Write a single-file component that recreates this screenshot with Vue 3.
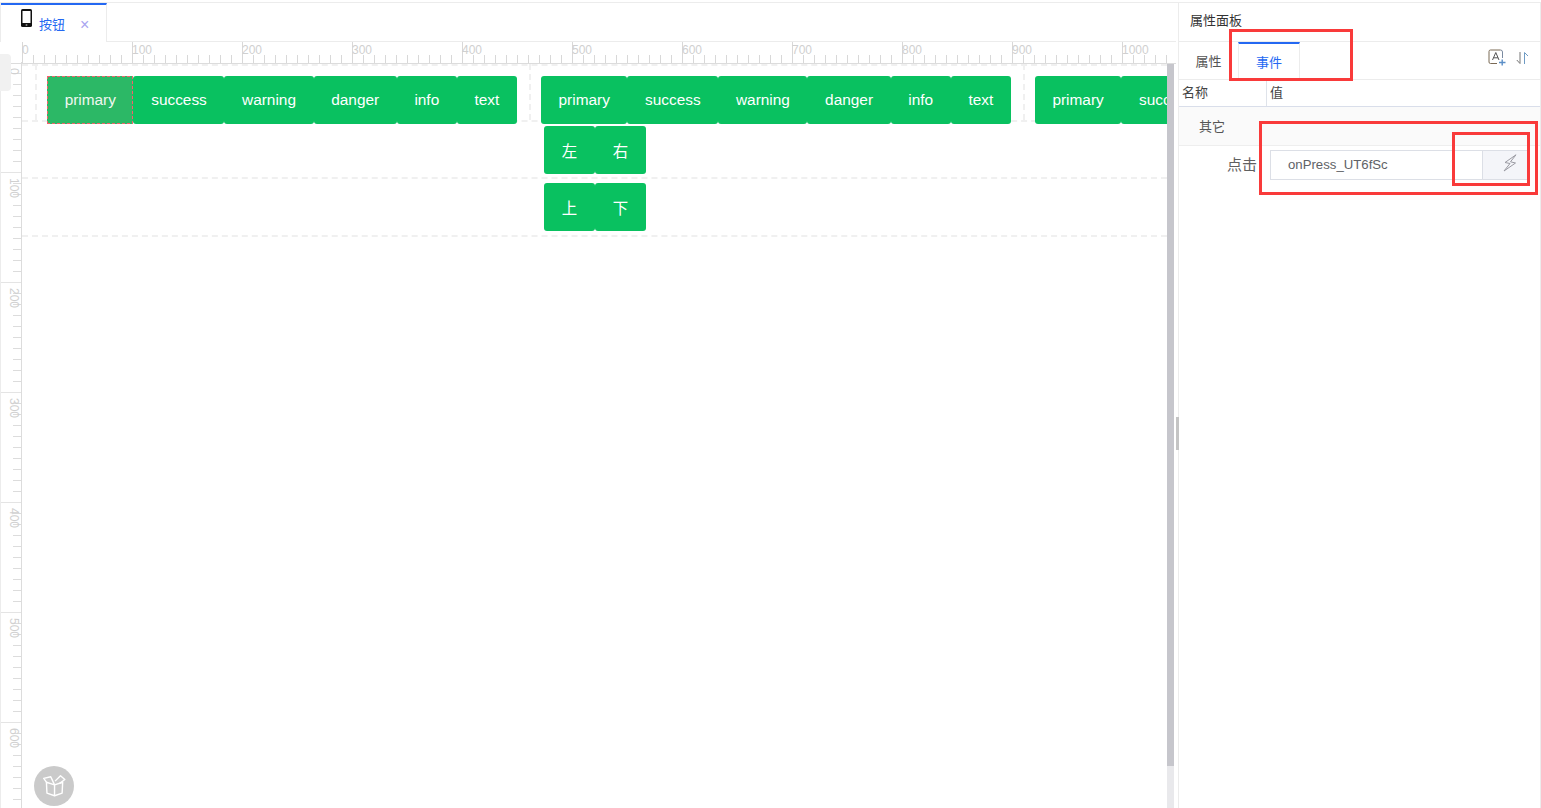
<template>
  <div class="page">
    <div class="main">
      <div class="tabbar">
        <div class="file-tab">
          <svg class="phone" width="11" height="18" viewBox="0 0 11 18">
            <rect x="0" y="0" width="11" height="18" rx="1.6" fill="#111" />
            <rect x="1.5" y="2" width="8" height="12" fill="#fff" />
            <circle cx="5.5" cy="16" r="1" fill="#888" />
          </svg>
          <span class="file-name">按钮</span>
          <span class="file-close">×</span>
        </div>
      </div>
      <div class="ruler-top">
        <div v-for="n in topMarks" :key="n" class="ruler-cell">
          <span class="ruler-num">{{ n }}</span>
        </div>
      </div>
      <div class="work">
        <div class="ruler-left">
          <div v-for="n in leftMarks" :key="n" class="ruler-vcell">
            <span class="ruler-vnum">{{ n }}</span>
          </div>
        </div>
        <div class="canvas">
          <div class="guide gh" style="top: 56px"></div>
          <div class="guide gh" style="top: 113px"></div>
          <div class="guide gh" style="top: 171px"></div>
          <div class="guide gh" style="top: 0"></div>
          <div class="guide gv" style="left: 13px"></div>
          <div class="guide gv" style="left: 507px"></div>
          <div class="guide gv" style="left: 1001px"></div>

          <div class="groups">
            <div v-for="g in 3" :key="g" class="btn-group">
              <button
                v-for="b in g === 3 ? buttons.slice(0, 2) : buttons"
                :key="b"
                class="btn"
                :class="{ selected: g === 1 && b === 'primary' }"
              >
                {{ b }}
              </button>
            </div>
          </div>
          <div class="btn-group sub first">
            <button class="btn cn">左</button>
            <button class="btn cn">右</button>
          </div>
          <div class="btn-group sub">
            <button class="btn cn">上</button>
            <button class="btn cn">下</button>
          </div>
        </div>
        <div class="scroll"><div class="scroll-thumb"></div></div>
      </div>
      <div class="side-handle"></div>
      <div class="fab">
        <svg width="26" height="26" viewBox="0 0 24 24" fill="none" stroke="#fff" stroke-width="1.3" stroke-linejoin="round">
          <path d="M5 8.5 L12.5 11 L12.5 21 L5.5 18.5 Z" />
          <path d="M12.5 11 L20 8.5 L19.5 18.5 L12.5 21" />
          <path d="M5 8.5 L2.5 5 L9 3.5 L12.5 11" />
          <path d="M13 7.5 L18 2.5 L22 6 L17 9.8" />
        </svg>
      </div>
    </div>

    <div class="splitter"><div class="split-grip"></div></div>

    <div class="panel">
      <div class="panel-title">属性面板</div>
      <div class="panel-tabs">
        <div class="ptab">属性</div>
        <div class="ptab active">事件</div>
        <div class="panel-icons">
          <svg width="18" height="18" viewBox="0 0 18 18" fill="none">
            <path d="M12.5 1 H2.5 Q1 1 1 2.5 V13 Q1 14.5 2.5 14.5 H9" stroke="#7a6a55" stroke-width="1" />
            <path d="M12.5 1 Q14.5 1 14.5 3 V9" stroke="#7a8aa0" stroke-width="1" />
            <path d="M4.5 11 L7.8 3.5 L11 11 M5.6 8.8 H10" stroke="#555" stroke-width="1" />
            <path d="M11 13.5 H17.5 M14.2 10.5 V16.5" stroke="#5b8fc7" stroke-width="1.4" />
          </svg>
          <svg class="sort-icon" width="13" height="14" viewBox="0 0 13 14" fill="none" stroke-width="1">
            <path d="M4 1 V12.5 L0.8 9" stroke="#777" />
            <path d="M8.5 13 V1.5 L12 5" stroke="#6f9bc4" />
          </svg>
        </div>
      </div>
      <div class="table-head">
        <div class="th-name">名称</div>
        <div class="th-value">值</div>
      </div>
      <div class="group-row">其它</div>
      <div class="prop-row">
        <div class="prop-label">点击</div>
        <div class="prop-input">
          <div class="prop-value">onPress_UT6fSc</div>
          <div class="prop-addon">
            <svg width="14" height="18" viewBox="0 0 14 18" fill="none" stroke="#9a9aa2" stroke-width="1" stroke-linejoin="round">
              <path d="M13 0.8 L2 8.5 L7 9.5 L1 17 L12.5 9 L7.5 7.8 Z" />
            </svg>
          </div>
        </div>
      </div>
    </div>

    <div class="mark mark-a"></div>
    <div class="mark mark-b"></div>
    <div class="mark mark-c"></div>
  </div>
</template>

<script setup>
const buttons = ["primary", "success", "warning", "danger", "info", "text"];
const topMarks = [0, 100, 200, 300, 400, 500, 600, 700, 800, 900, 1000];
const leftMarks = [0, 100, 200, 300, 400, 500, 600];
</script>

<style>
html,
body {
  margin: 0;
  background: #fff;
  overflow: hidden;
}
</style>

<style scoped>
.page {
  position: relative;
  display: flex;
  width: 1541px;
  height: 808px;
  box-sizing: border-box;
  padding-top: 2px;
  overflow: hidden;
  font-family: "Liberation Sans", "Noto Sans CJK SC", sans-serif;
  font-size: 13px;
  color: #444;
}
.page::before {
  content: "";
  position: absolute;
  left: 0;
  right: 0;
  top: 2px;
  height: 1px;
  background: #ececec;
}

/* left: editor */
.main {
  position: relative;
  width: 1176px;
  flex: none;
  display: flex;
  flex-direction: column;
}
.tabbar {
  height: 40px;
  flex: none;
  box-sizing: border-box;
  border-bottom: 1px solid #ececec;
  border-left: 1px solid #ececec;
  display: flex;
}
.file-tab {
  width: 106px;
  height: 39px;
  margin-top: 1px;
  box-sizing: border-box;
  background: #fff;
  border-top: 2px solid #2468f2;
  border-right: 1px solid #ececec;
  display: flex;
  align-items: center;
  padding: 0 0 0 20px;
}
.phone {
  margin-top: -11px;
}
.file-name {
  margin-left: 7px;
  color: #2468f2;
  font-size: 13px;
}
.file-close {
  margin-left: 15px;
  margin-top: 2px;
  color: #a9a4f0;
  font-size: 16px;
}

.ruler-top {
  height: 21px;
  flex: none;
  display: flex;
  padding-left: 22px;
  overflow: hidden;
  border-bottom: 1px solid #dcdcdc;
}
.ruler-cell {
  width: 110px;
  flex: none;
  box-sizing: border-box;
  height: 21px;
  border-left: 1px solid #d8d8d8;
  background: repeating-linear-gradient(to right, transparent 0, transparent 10px, #d8d8d8 10px, #d8d8d8 11px) 0 13px / 100% 8px no-repeat;
}
.ruler-num {
  display: block;
  margin-left: -1px;
  margin-top: 1px;
  font-size: 12px;
  line-height: 14px;
  color: #d0d0d0;
}

.work {
  flex: 1;
  display: flex;
  min-height: 0;
}
.ruler-left {
  width: 22px;
  flex: none;
  margin-top: -2px;
  box-sizing: border-box;
  border-right: 1px solid #dcdcdc;
  border-left: 1px solid #ececec;
}
.ruler-vcell {
  position: relative;
  height: 110px;
  box-sizing: border-box;
  border-top: 1px solid #e4e4e4;
  background: repeating-linear-gradient(to bottom, transparent 0, transparent 10px, #dcdcdc 10px, #dcdcdc 11px) right 0 top 0 / 8px 100% no-repeat;
}
.ruler-vcell:first-child {
  border-top-color: transparent;
}
.ruler-vnum {
  position: absolute;
  left: 7px;
  top: 5px;
  font-size: 12px;
  line-height: 12px;
  color: #d0d0d0;
  writing-mode: vertical-rl;
}

.canvas {
  position: relative;
  flex: none;
  width: 1145px;
  box-sizing: border-box;
  padding: 12px 0 0 25px;
  overflow: hidden;
}
.guide {
  position: absolute;
}
.gh {
  left: 0;
  right: 0;
  border-top: 2px dashed #f0f0f0;
}
.gv {
  top: 0;
  height: 56px;
  border-left: 2px dashed #f0f0f0;
}
.groups {
  position: relative;
  display: flex;
  gap: 24px;
  width: 1300px;
}
.btn-group {
  position: relative;
  display: flex;
  flex: none;
}
.btn {
  height: 48px;
  padding: 0 17.64px;
  flex: none;
  border: none;
  border-radius: 3px;
  background: #09c160;
  color: #fff;
  font-family: inherit;
  font-size: 15.4px;
}
.btn.selected {
  padding: 0 17.14px 0 17.64px;
  border-radius: 0;
  color: #f0f7f0;
  background:
    repeating-linear-gradient(90deg, #f3616b 0 3px, transparent 3px 5px) left top / 100% 1px no-repeat,
    repeating-linear-gradient(90deg, #f3616b 0 3px, transparent 3px 5px) left bottom / 100% 1px no-repeat,
    repeating-linear-gradient(180deg, #f3616b 0 3px, transparent 3px 5px) left top / 1px 100% no-repeat,
    repeating-linear-gradient(180deg, #f3616b 0 3px, transparent 3px 5px) right top / 1px 100% no-repeat,
    #2cb866;
}
.btn.selected + .btn {
  padding-left: 18.14px;
}
.btn.cn {
  width: 51px;
  padding: 0;
}
.sub {
  margin-left: 497px;
  margin-top: 9px;
}
.sub.first {
  margin-top: 2px;
}

.scroll {
  width: 7px;
  flex: none;
  background: #e9e9ec;
}
.scroll-thumb {
  height: 702px;
  background: #c6c6cc;
}

.side-handle {
  position: absolute;
  left: 0;
  top: 52px;
  width: 11px;
  height: 37px;
  background: #f1f1f1;
  border-radius: 0 4px 4px 0;
}
.fab {
  position: absolute;
  left: 34px;
  top: 764px;
  width: 40px;
  height: 40px;
  border-radius: 50%;
  background: #cacaca;
  display: flex;
  align-items: center;
  justify-content: center;
}

.splitter {
  position: relative;
  width: 2px;
  flex: none;
  border-right: 1px solid #ececec;
}
.split-grip {
  position: absolute;
  left: 0;
  top: 415px;
  width: 3px;
  height: 33px;
  background: #c4c4c4;
}

/* right: property panel */
.panel {
  flex: 1;
  min-width: 0;
  box-sizing: border-box;
  border-right: 1px solid #ececec;
  display: flex;
  flex-direction: column;
}
.panel-title {
  height: 39px;
  line-height: 38px;
  padding-left: 11px;
  border-bottom: 1px solid #ececec;
  color: #333;
}
.panel-tabs {
  height: 37px;
  display: flex;
  border-bottom: 1px solid #ececec;
}
.ptab {
  width: 59px;
  height: 37px;
  box-sizing: border-box;
  line-height: 40px;
  text-align: center;
  color: #555;
}
.ptab.active {
  width: 62px;
  border-top: 2px solid #2468f2;
  border-left: 1px solid #ececec;
  border-right: 1px solid #ececec;
  line-height: 38px;
  color: #2468f2;
}
.panel-icons {
  margin-left: auto;
  display: flex;
  gap: 10px;
  padding: 7px 11px 0 0;
}
.sort-icon {
  margin-top: 2px;
}
.table-head {
  display: flex;
  height: 26px;
  border-bottom: 1px solid #d9deea;
  line-height: 26px;
  color: #444;
}
.th-name {
  width: 88px;
  box-sizing: border-box;
  padding-left: 3px;
  border-right: 1px solid #dfe3ea;
}
.th-value {
  padding-left: 3px;
}
.group-row {
  height: 38px;
  line-height: 40px;
  padding-left: 20px;
  background: #fafafa;
  border-bottom: 1px solid #eee;
  color: #555;
}
.prop-row {
  display: flex;
  align-items: center;
  padding-top: 4px;
}
.prop-label {
  width: 78px;
  font-size: 15px;
  line-height: 30px;
  text-align: right;
  color: #606060;
}
.prop-input {
  display: flex;
  width: 258px;
  height: 30px;
  margin-left: 13px;
  box-sizing: border-box;
  border: 1px solid #dcdfe6;
}
.prop-value {
  flex: 1;
  padding-left: 17px;
  line-height: 28px;
  font-size: 13.2px;
  color: #606266;
}
.prop-addon {
  width: 45px;
  background: #f4f5f9;
  border-left: 1px solid #dcdfe6;
  display: flex;
  align-items: center;
  justify-content: center;
  padding: 0 0 5px 10px;
  box-sizing: border-box;
}

/* red annotation boxes drawn on top of the screenshot */
.mark {
  position: absolute;
  box-sizing: border-box;
  border: 3px solid #f93a3a;
}
.mark-a {
  left: 1229px;
  top: 29px;
  width: 124px;
  height: 52px;
}
.mark-b {
  left: 1259px;
  top: 121px;
  width: 279px;
  height: 74px;
}
.mark-c {
  left: 1452px;
  top: 132px;
  width: 78px;
  height: 54px;
}
</style>
